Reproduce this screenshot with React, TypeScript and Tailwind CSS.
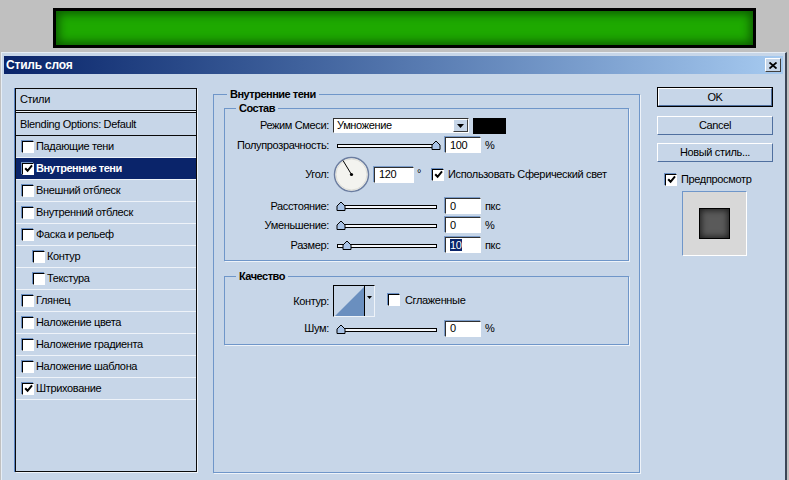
import React from "react";

const Check = ({ checked }: { checked?: boolean }) => (
  <span className="flex h-[12px] w-[12px] shrink-0 items-center justify-center border border-black border-r-white border-b-white bg-white shadow-[-1px_-1px_0_#6b8fc2]">
    {checked && (
      <svg width="9" height="9" viewBox="0 0 9 9">
        <path d="M1.2 4.2 L3.6 6.8 L8 1.4" stroke="black" strokeWidth="2" fill="none" />
      </svg>
    )}
  </span>
);

const Field = ({ value, w = "w-[36px]", selected }: { value: string; w?: string; selected?: boolean }) => (
  <div className={`flex h-[16px] ${w} shrink-0 items-center border border-[#303030] border-r-white border-b-white bg-white pl-[4px] shadow-[-1px_-1px_0_#7b9cc9]`}>
    {selected ? <span className="bg-[#0a246a] leading-[12px] text-white">{value}</span> : value}
  </div>
);

const Slider = ({ pos }: { pos: number }) => (
  <svg width="108" height="10" viewBox="0 0 108 10" className="ml-[4px] shrink-0">
    <rect x="4.5" y="4.5" width="99" height="3" fill="#f4f7fb" stroke="black" />
    <path
      d={`M${pos - 4} 9.5 L${pos - 4} 5 L${pos} 1 L${pos + 4} 5 L${pos + 4} 9.5 Z`}
      fill="#a9c3e6"
      stroke="black"
    />
  </svg>
);

const Label = ({ children }: { children: React.ReactNode }) => (
  <div className="flex w-[104px] shrink-0 justify-end whitespace-nowrap">{children}</div>
);

const ListRow = ({ label, checked, indent, active }: { label: string; checked?: boolean; indent?: boolean; active?: boolean }) => (
  <div
    className={`flex h-[22px] items-center border-b border-[#eef3f9] ${indent ? "pl-[17px]" : "pl-[6px]"} ${
      active ? "bg-[#0a246a] font-bold tracking-[-0.5px] text-white" : ""
    }`}
  >
    <Check checked={checked} />
    <span className="ml-[2px] whitespace-nowrap">{label}</span>
  </div>
);

const Button = ({ children, def, h = "h-[19px]" }: { children: React.ReactNode; def?: boolean; h?: string }) => (
  <div className={`${h} w-[116px] ${def ? "border border-black" : ""}`}>
    <div className="flex h-full items-center justify-center border border-white border-r-[#4f6f9f] border-b-[#4f6f9f] bg-[#c7d6e8]">
      {children}
    </div>
  </div>
);

export default function App() {
  return (
    <div className="h-[480px] w-[789px] overflow-hidden bg-[#c0c0c0] font-['Liberation_Sans',Arial,sans-serif] text-[11px] tracking-[-0.35px] text-black">
      <div className="ml-[53px] mt-[8px] h-[40px] w-[703px] border-[3px] border-black bg-[#1ea900] shadow-[inset_0_0_10px_3px_#0c5c00]" />

      <div className="ml-[1px] mt-[4px] h-[440px] w-[786px] border-t border-l border-[#e6edf5] border-r-2 border-r-[#3c4656] bg-[#c7d6e8] px-[2px] pt-[3px]">
        {/* title bar */}
        <div className="flex h-[18px] items-center justify-between bg-gradient-to-r from-[#0a246a] to-[#a6caf0] pl-[2px] pr-[2px]">
          <span className="text-[12px] font-bold tracking-[-0.2px] text-white">Стиль слоя</span>
          <div className="flex h-[14px] w-[16px] items-center justify-center border border-white border-r-[#404040] border-b-[#404040] bg-[#c7d6e8]">
            <svg width="8" height="7" viewBox="0 0 8 7">
              <path d="M0.5 0.5 L7.5 6.5 M7.5 0.5 L0.5 6.5" stroke="black" strokeWidth="1.8" />
            </svg>
          </div>
        </div>

        <div className="flex items-start pl-[11px] pt-[13px]">
          {/* styles list */}
          <div className="mt-[1px] h-[384px] w-[182px] shrink-0 border border-[#0a0a0a] shadow-[-1px_0_0_#5b86c4,1px_1px_0_#eef3f9]">
            <div className="flex h-[22px] items-center border-b border-[#0a0a0a] pl-[4px]">Стили</div>
            <div className="h-[1px] bg-[#eef3f9]" />
            <div className="flex h-[24px] items-center border-y border-[#0a0a0a] pl-[4px]">Blending Options: Default</div>
            <ListRow label="Падающие тени" />
            <ListRow label="Внутренние тени" checked active />
            <ListRow label="Внешний отблеск" />
            <ListRow label="Внутренний отблеск" />
            <ListRow label="Фаска и рельеф" />
            <ListRow label="Контур" indent />
            <ListRow label="Текстура" indent />
            <ListRow label="Глянец" />
            <ListRow label="Наложение цвета" />
            <ListRow label="Наложение градиента" />
            <ListRow label="Наложение шаблона" />
            <ListRow label="Штрихование" checked />
          </div>

          {/* settings */}
          <div className="relative ml-[16px] mt-[7px] h-[379px] w-[427px] shrink-0 border border-[#6f96c9] shadow-[1px_1px_0_#eef3f9]">
            <span className="absolute left-[13px] top-[-8px] bg-[#c7d6e8] px-[3px] font-bold leading-[14px] tracking-[-0.5px]">Внутренние тени</span>

            <div className="relative ml-[10px] mt-[13px] h-[153px] w-[405px] border border-[#6f96c9] shadow-[1px_1px_0_#eef3f9]">
              <span className="absolute left-[11px] top-[-8px] bg-[#c7d6e8] px-[3px] font-bold leading-[14px] tracking-[-0.5px]">Состав</span>

              <div className="mt-[9px] flex h-[15px] items-center">
                <Label>Режим Смеси:</Label>
                <div className="ml-[4px] flex h-[15px] w-[136px] items-center justify-between border border-[#303030] border-r-white border-b-white bg-white pl-[3px]">
                  <span>Умножение</span>
                  <div className="flex h-[13px] w-[15px] items-center justify-center border border-white border-r-[#404040] border-b-[#404040] bg-[#c7d6e8]">
                    <svg width="7" height="4" viewBox="0 0 7 4">
                      <path d="M0 0 L7 0 L3.5 4 Z" fill="black" />
                    </svg>
                  </div>
                </div>
                <div className="ml-[4px] h-[16px] w-[33px] bg-black" />
              </div>

              <div className="mt-[4px] flex h-[16px] items-center">
                <Label>Полупрозрачность:</Label>
                <Slider pos={103} />
                <div className="ml-[4px]">
                  <Field value="100" />
                </div>
                <span className="ml-[4px]">%</span>
              </div>

              <div className="mt-[3px] flex h-[37px] items-center">
                <Label>Угол:</Label>
                <svg width="37" height="37" viewBox="0 0 37 37" className="ml-[4px] shrink-0">
                  <circle cx="18.5" cy="18.5" r="17" fill="#f3f3ef" stroke="#6b7da0" strokeWidth="1.5" />
                  <circle cx="18.5" cy="18.5" r="15.5" fill="none" stroke="#dcdcd6" strokeWidth="1" />
                  <path d="M18.5 18.5 L10 4.5" stroke="black" strokeWidth="1" />
                  <circle cx="18.5" cy="18.5" r="1.6" fill="black" />
                </svg>
                <div className="ml-[4px]">
                  <Field value="120" w="w-[40px]" />
                </div>
                <span className="w-[18px] self-start pl-[3px] pt-[9px]">°</span>
                <Check checked />
                <span className="ml-[4px] whitespace-nowrap">Использовать Сферический свет</span>
              </div>

              <div className="mt-[5px] flex h-[16px] items-center">
                <Label>Расстояние:</Label>
                <Slider pos={8} />
                <div className="ml-[4px]">
                  <Field value="0" />
                </div>
                <span className="ml-[4px]">пкс</span>
              </div>

              <div className="mt-[3px] flex h-[16px] items-center">
                <Label>Уменьшение:</Label>
                <Slider pos={8} />
                <div className="ml-[4px]">
                  <Field value="0" />
                </div>
                <span className="ml-[4px]">%</span>
              </div>

              <div className="mt-[4px] flex h-[16px] items-center">
                <Label>Размер:</Label>
                <Slider pos={14} />
                <div className="ml-[4px]">
                  <Field value="10" selected />
                </div>
                <span className="ml-[4px]">пкс</span>
              </div>
            </div>

            <div className="relative ml-[10px] mt-[15px] h-[69px] w-[405px] border border-[#6f96c9] shadow-[1px_1px_0_#eef3f9]">
              <span className="absolute left-[11px] top-[-8px] bg-[#c7d6e8] px-[3px] font-bold leading-[14px] tracking-[-0.5px]">Качество</span>

              <div className="mt-[8px] flex h-[32px] items-center">
                <Label>Контур:</Label>
                <div className="ml-[4px] flex h-[32px] w-[42px] border border-black border-r-[#eef3f9] border-b-[#eef3f9]">
                  <svg width="30" height="30" viewBox="0 0 30 30" className="shrink-0">
                    <path d="M1 30 L30 1 L30 30 Z" fill="#6a8fbf" />
                  </svg>
                  <div className="flex flex-1 justify-center border-l border-black pt-[10px]">
                    <svg width="5" height="3" viewBox="0 0 5 3">
                      <path d="M0 0 L5 0 L2.5 3 Z" fill="black" />
                    </svg>
                  </div>
                </div>
                <div className="ml-[13px] mb-[2px]">
                  <Check />
                </div>
                <span className="mb-[2px] ml-[5px]">Сглаженные</span>
              </div>

              <div className="mt-[4px] flex h-[15px] items-center">
                <Label>Шум:</Label>
                <Slider pos={8} />
                <div className="ml-[4px]">
                  <Field value="0" />
                </div>
                <span className="ml-[4px]">%</span>
              </div>
            </div>
          </div>

          {/* buttons */}
          <div className="ml-[17px] w-[116px] shrink-0">
            <Button def h="h-[20px]">OK</Button>
            <div className="mt-[9px]">
              <Button>Cancel</Button>
            </div>
            <div className="mt-[8px]">
              <Button>Новый стиль...</Button>
            </div>
            <div className="mt-[11px] flex h-[13px] items-center pl-[8px]">
              <Check checked />
              <span className="ml-[4px]">Предпросмотр</span>
            </div>
            <div className="ml-[25px] mt-[5px] flex h-[65px] w-[65px] items-center justify-center border border-[#6f96c9] border-r-white border-b-white bg-[#d8d8d8]">
              <div className="h-[31px] w-[31px] border border-black bg-[#5a5a5a] shadow-[inset_0_0_6px_1px_#1a1a1a]" />
            </div>
          </div>
        </div>
      </div>
    </div>
  );
}
